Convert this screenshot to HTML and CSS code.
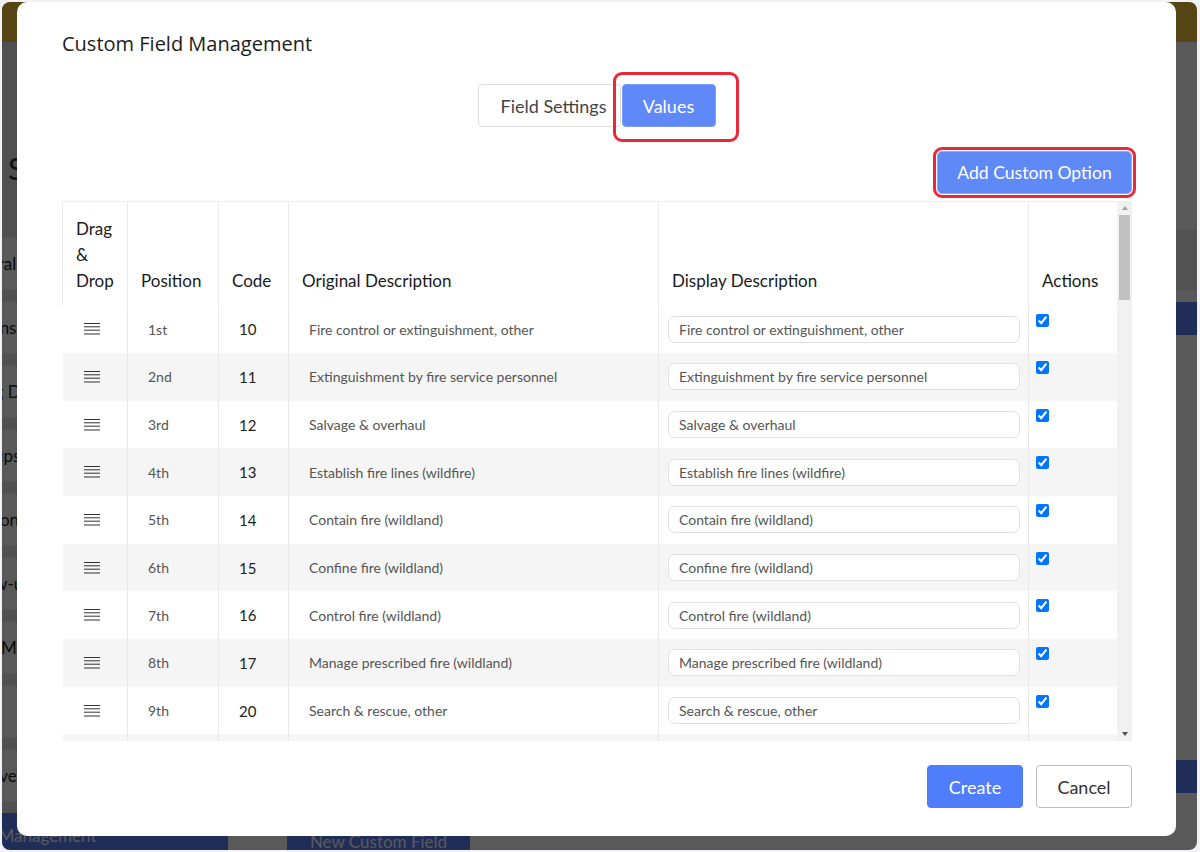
FILE: index.html
```html
<!DOCTYPE html>
<html lang="en">
<head>
  <meta charset="UTF-8">
  <meta name="viewport" content="width=device-width, initial-scale=1.0">
  <title>Custom Field Management</title>
  <link rel="stylesheet" href="styles.css">
</head>
<body>
  <div class="screen">
    <header class="topbar"></header>
    <div class="page">
      <aside class="sidebar">
        <h1 class="side-title">Settings</h1>
        <nav class="nav">
          <a class="nav-item">General</a>
          <a class="nav-item">Regions</a>
          <a class="nav-item">Billing Data</a>
          <a class="nav-item">Lookups</a>
          <a class="nav-item">Relations</a>
          <a class="nav-item">Follow-up</a>
          <a class="nav-item">Form Modules</a>
          <a class="nav-item">Units</a>
          <a class="nav-item">Inactive</a>
          <a class="nav-item active">Field Management</a>
        </nav>
      </aside>
      <main class="main">
        <div class="main-tabs"></div>
        <div class="main-head"></div>
        <div class="main-rows"></div>
        <div class="main-head"></div>
        <button class="new-btn">New Custom Field</button>
      </main>
    </div>
    <div class="overlay"></div>

    <div class="modal">
      <h2 class="modal-title">Custom Field Management</h2>

      <div class="tabs">
        <button class="tab">Field Settings</button>
        <span class="marked">
          <button class="tab active">Values</button>
        </span>
      </div>

      <div class="toolbar">
        <button class="btn-add">Add Custom Option</button>
      </div>

      <div class="table-box">
        <div class="table-wrap">
          <table class="values">
            <colgroup>
              <col style="width: 65px">
              <col style="width: 91px">
              <col style="width: 70px">
              <col style="width: 370px">
              <col style="width: 370px">
              <col style="width: 89px">
            </colgroup>
            <thead>
              <tr>
                <th>Drag &amp; Drop</th>
                <th>Position</th>
                <th>Code</th>
                <th>Original Description</th>
                <th>Display Description</th>
                <th>Actions</th>
              </tr>
            </thead>
            <tbody id="valueRows"></tbody>
          </table>
        </div>
        <div class="scrollbar">
          <span class="arrow up"></span>
          <span class="thumb"></span>
          <span class="track"></span>
          <span class="arrow down"></span>
        </div>
      </div>

      <div class="modal-footer">
        <button class="btn-create">Create</button>
        <button class="btn-cancel">Cancel</button>
      </div>
    </div>
  </div>

  <script>
    const options = [
      ['10', 'Fire control or extinguishment, other'],
      ['11', 'Extinguishment by fire service personnel'],
      ['12', 'Salvage & overhaul'],
      ['13', 'Establish fire lines (wildfire)'],
      ['14', 'Contain fire (wildland)'],
      ['15', 'Confine fire (wildland)'],
      ['16', 'Control fire (wildland)'],
      ['17', 'Manage prescribed fire (wildland)'],
      ['20', 'Search & rescue, other'],
      ['21', 'Search'],
      ['22', 'Rescue, remove from harm'],
      ['23', 'Extricate, disentangle'],
      ['24', 'Recover body'],
      ['30', 'Emergency medical services, other'],
      ['31', 'Provide first aid & check for injuries'],
      ['32', 'Provide basic life support (BLS)'],
      ['33', 'Provide advanced life support (ALS)'],
      ['34', 'Transport person'],
      ['40', 'Hazardous condition, other'],
      ['41', 'Identify, analyze hazardous materials'],
      ['42', 'HazMat detection, monitoring, sampling, & analysis'],
      ['43', 'Hazardous materials spill control and confinement'],
      ['44', 'Hazardous materials leak control & containment'],
      ['45', 'Remove hazard'],
      ['46', 'Decontaminate persons or equipment'],
      ['47', 'Decontaminate occupancy or area'],
      ['48', 'Remove hazardous materials'],
      ['50', 'Fires, rescues & hazardous conditions, other'],
      ['51', 'Ventilate'],
      ['52', 'Forcible entry'],
      ['53', 'Evacuate area'],
      ['54', 'Determine if materials are non-hazardous'],
      ['55', 'Establish safe area'],
      ['56', 'Provide air supply'],
      ['57', 'Provide light or electrical power'],
      ['58', 'Operate apparatus or vehicle'],
      ['60', 'Systems and services, other'],
      ['61', 'Restore municipal services'],
      ['62', 'Restore sprinkler or fire protection system'],
      ['63', 'Restore fire alarm system'],
      ['64', 'Shut down system'],
      ['65', 'Secure property'],
      ['66', 'Remove water'],
      ['70', 'Assistance, other'],
      ['71', 'Assist physically disabled'],
      ['72', 'Assist animal'],
      ['73', 'Provide manpower'],
      ['74', 'Provide apparatus'],
      ['75', 'Provide equipment'],
      ['76', 'Provide water'],
      ['77', 'Control crowd'],
      ['78', 'Control traffic'],
      ['79', 'Assess damage'],
      ['80', 'Information, investigation & enforcement, other'],
      ['81', 'Incident command'],
      ['82', 'Notify other agencies'],
      ['83', 'Provide information to public or media'],
      ['84', 'Refer to proper authority'],
      ['85', 'Enforce codes'],
      ['86', 'Investigate'],
      ['87', 'Investigate fire out on arrival'],
      ['90', 'Fill-in, standby, other'],
      ['91', 'Fill-in or moveup'],
      ['92', 'Standby'],
      ['93', 'Cancelled en route'],
      ['00', 'Action taken, other']
    ];

    function ordinal(n) {
      const tens = n % 100;
      if (tens >= 11 && tens <= 13) return n + 'th';
      const suffix = { 1: 'st', 2: 'nd', 3: 'rd' }[n % 10] || 'th';
      return n + suffix;
    }

    function escapeHtml(text) {
      return text.replace(/&/g, '&amp;').replace(/"/g, '&quot;').replace(/</g, '&lt;');
    }

    const grip = '<svg class="grip" width="16" height="12" viewBox="0 0 16 12">' +
      '<path d="M0 .5h16M0 3.8h16M0 7.2h16M0 11h16" stroke="#333" stroke-width="1"/></svg>';

    const tbody = document.getElementById('valueRows');
    tbody.innerHTML = options.map(([code, desc], i) => `
      <tr>
        <td class="drag">${grip}</td>
        <td class="pos">${ordinal(i + 1)}</td>
        <td class="code">${code}</td>
        <td class="orig">${escapeHtml(desc)}</td>
        <td class="disp"><input type="text" value="${escapeHtml(desc)}"></td>
        <td class="act"><input type="checkbox" checked></td>
      </tr>
    `).join('');
  </script>
</body>
</html>
```

FILE: styles.css
```css
* {
  margin: 0;
  padding: 0;
  box-sizing: border-box;
}

body {
  background: #f1f1f6;
  font-family: 'Lato', 'Liberation Sans', sans-serif;
  overflow: hidden;
}

button {
  font-family: inherit;
  cursor: pointer;
}

/* page behind the dialog */
.screen {
  position: relative;
  width: 1195px;
  height: 848px;
  margin: 2px 3px 2px 2px;
  border-radius: 8px;
  overflow: hidden;
  background: #fff;
}

.topbar {
  height: 40px;
  background: #f3c239;
}

.page {
  display: flex;
  margin-left: -46px;
  height: 808px;
}

.sidebar {
  width: 272px;
  flex-shrink: 0;
  background: #e6e6e6;
}

.side-title {
  font-size: 30px;
  font-weight: 400;
  color: #333;
  padding: 108px 0 0 52px;
  height: 195px;
}

.nav {
  display: flex;
  flex-direction: column;
  gap: 11px;
}

.nav-item {
  display: flex;
  align-items: center;
  height: 53px;
  background: #fff;
  color: #222;
  font-size: 17px;
  padding-left: 2px;
  white-space: nowrap;
}

.nav-item.active {
  background: #5981ff;
  color: #fff;
  height: 45px;
}

.main {
  flex: 1;
  padding: 188px 0 0 59px;
  background: #fff;
}

.main-tabs {
  height: 60px;
  background: #ebebeb;
}

.main-head {
  height: 33px;
  background: #5981ff;
  margin-top: 12px;
}

.main-rows {
  height: 413px;
}

.new-btn {
  margin-top: 33px;
  height: 30px;
  width: 183px;
  border: none;
  background: #5981ff;
  color: #fff;
  font-size: 17px;
}

.overlay {
  position: absolute;
  inset: 0;
  background: rgba(0, 0, 0, 0.65);
}

/* dialog */
.modal {
  position: absolute;
  left: 15px;
  top: 0;
  width: 1159px;
  height: 834px;
  background: #fff;
  border-radius: 10px;
  padding: 30px 44px 28px 45px;
  display: flex;
  flex-direction: column;
}

.modal-title {
  font-family: 'Open Sans', 'Lato', sans-serif;
  font-size: 20px;
  font-weight: 500;
  line-height: 24px;
  color: #1c1c1c;
}

.tabs {
  display: flex;
  justify-content: center;
  margin-top: 28px;
}

.tab {
  height: 43px;
  padding: 0 13px 0 21px;
  font-size: 18px;
  color: #444;
  background: #fff;
  border: 1px solid #dedede;
  border-radius: 4px;
}

.tab.active {
  width: 94px;
  padding: 0;
  margin-left: 1px;
  color: #fff;
  background: #5f88f8;
  border-color: #7c9cf9;
}

/* red call-out box around the active tab */
.marked {
  position: relative;
  display: flex;
}

.marked::after {
  content: '';
  position: absolute;
  top: -12px;
  left: -8px;
  right: -23px;
  bottom: -15px;
  border: 3px solid #e8293b;
  border-radius: 9px;
}

.toolbar {
  display: flex;
  justify-content: flex-end;
  margin-top: 24px;
}

.btn-add {
  height: 43px;
  width: 195px;
  font-size: 17.6px;
  color: #fff;
  background: #6089f8;
  border: 1px solid #8eaafa;
  border-radius: 5px;
  outline: 3px solid #e8293b;
  outline-offset: 1px;
}

.table-box {
  display: flex;
  margin-top: 7px;
  height: 540px;
}

.table-wrap {
  width: 1055px;
  overflow: hidden;
}

/* scrollbar of the options list */
.scrollbar {
  width: 15px;
  display: flex;
  flex-direction: column;
  align-items: center;
  background: #f1f1f1;
}

.arrow {
  height: 14px;
  width: 15px;
  display: flex;
  align-items: center;
  justify-content: center;
}

.arrow::before {
  content: '';
  border-left: 3.5px solid transparent;
  border-right: 3.5px solid transparent;
}

.arrow.up::before {
  border-bottom: 4px solid #a3a3a3;
}

.arrow.down::before {
  border-top: 4px solid #505050;
}

.thumb {
  width: 11px;
  height: 85px;
  background: #c1c1c1;
}

.track {
  flex: 1;
}

.values {
  width: 1055px;
  table-layout: fixed;
  border-collapse: collapse;
}

.values th {
  background: #fff;
  height: 104px;
  padding: 13px 13px 12px 13px;
  vertical-align: bottom;
  text-align: left;
  font-size: 17px;
  font-weight: 400;
  line-height: 26px;
  color: #1a1a1a;
  border-top: 1px solid #efefef;
  border-left: 1px solid #ececec;
  box-shadow: 0 5px 6px -3px rgba(0, 0, 0, 0.1);
  position: relative;
  z-index: 1;
}

.values th:last-child {
  border-bottom-right-radius: 6px;
}

.values tbody tr {
  height: 47.67px;
}

.values tbody tr:nth-child(even) {
  background: #f5f5f5;
}

.values td {
  padding: 0 10px 0 20px;
  font-size: 14px;
  color: #555;
  vertical-align: middle;
  border-left: 1px solid #e8e8e8;
  white-space: nowrap;
  overflow: hidden;
}

.values td:first-child {
  border-left: none;
  padding-left: 21px;
}

.grip {
  display: block;
}

.values td.code {
  font-size: 15px;
  color: #222;
}

.values td.disp {
  padding: 0 9px;
}

.disp input {
  width: 352px;
  height: 27px;
  padding: 0 10px;
  font-family: inherit;
  font-size: 14px;
  color: #555;
  background: #fff;
  border: 1px solid #e0e0e0;
  border-radius: 7px;
  outline: none;
}

.values td.act {
  vertical-align: top;
  padding: 8px 0 0 7px;
}

.act input {
  display: block;
  width: 13px;
  height: 13px;
  margin: 0;
}

.modal-footer {
  display: flex;
  justify-content: flex-end;
  gap: 13px;
  margin-top: 24px;
}

.btn-create,
.btn-cancel {
  width: 96px;
  height: 43px;
  font-size: 18px;
  border-radius: 4px;
}

.btn-create {
  color: #fff;
  background: #4f7dfc;
  border: 1px solid #4f7dfc;
}

.btn-cancel {
  color: #333;
  background: #fff;
  border: 1px solid #bdbdbd;
}
```
